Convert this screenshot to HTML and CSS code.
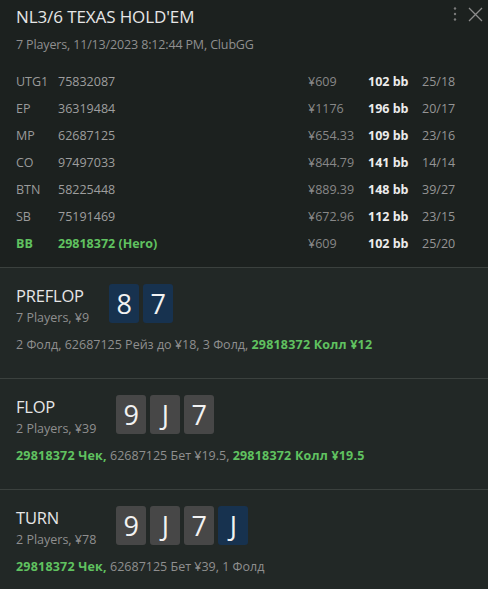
FILE: index.html
```html
<!DOCTYPE html>
<html>
<head>
<meta charset="utf-8">
<link rel="stylesheet" href="styles.css">
</head>
<body>
<div class="panel">
  <header class="head">
    <div class="head-top">
      <div>
        <div class="title">NL3/6 TEXAS HOLD'EM</div>
        <div class="sub">7 Players, 11/13/2023 8:12:44 PM, ClubGG</div>
      </div>
      <div class="icons">
        <svg class="dots" width="6" height="16" viewBox="0 0 6 16"><circle cx="3" cy="2.5" r="1.2"/><circle cx="3" cy="8" r="1.2"/><circle cx="3" cy="13.5" r="1.2"/></svg>
        <svg class="close" width="15" height="15" viewBox="0 0 15 15"><path d="M1 1 L14 14 M14 1 L1 14"/></svg>
      </div>
    </div>
    <div class="players">
      <div class="row"><span class="pos">UTG1</span><span class="name">75832087</span><span class="stack">¥609</span><span class="bb">102 bb</span><span class="ratio">25/18</span></div>
      <div class="row"><span class="pos">EP</span><span class="name">36319484</span><span class="stack">¥1176</span><span class="bb">196 bb</span><span class="ratio">20/17</span></div>
      <div class="row"><span class="pos">MP</span><span class="name">62687125</span><span class="stack">¥654.33</span><span class="bb">109 bb</span><span class="ratio">23/16</span></div>
      <div class="row"><span class="pos">CO</span><span class="name">97497033</span><span class="stack">¥844.79</span><span class="bb">141 bb</span><span class="ratio">14/14</span></div>
      <div class="row"><span class="pos">BTN</span><span class="name">58225448</span><span class="stack">¥889.39</span><span class="bb">148 bb</span><span class="ratio">39/27</span></div>
      <div class="row"><span class="pos">SB</span><span class="name">75191469</span><span class="stack">¥672.96</span><span class="bb">112 bb</span><span class="ratio">23/15</span></div>
      <div class="row hero"><span class="pos">BB</span><span class="name">29818372 (Hero)</span><span class="stack">¥609</span><span class="bb">102 bb</span><span class="ratio">25/20</span></div>
    </div>
  </header>

  <section class="street">
    <div class="street-top">
      <div class="street-info">
        <div class="street-name">PREFLOP</div>
        <div class="street-sub">7 Players, ¥9</div>
      </div>
      <div class="cards">
        <div class="card hole">8</div>
        <div class="card hole">7</div>
      </div>
    </div>
    <div class="actions">2 Фолд, 62687125 Рейз до ¥18, 3 Фолд, <b class="me">29818372 Колл ¥12</b></div>
  </section>

  <section class="street">
    <div class="street-top">
      <div class="street-info">
        <div class="street-name">FLOP</div>
        <div class="street-sub">2 Players, ¥39</div>
      </div>
      <div class="cards">
        <div class="card">9</div>
        <div class="card">J</div>
        <div class="card">7</div>
      </div>
    </div>
    <div class="actions"><b class="me">29818372 Чек,</b> 62687125 Бет ¥19.5, <b class="me">29818372 Колл ¥19.5</b></div>
  </section>

  <section class="street last">
    <div class="street-top">
      <div class="street-info">
        <div class="street-name">TURN</div>
        <div class="street-sub">2 Players, ¥78</div>
      </div>
      <div class="cards">
        <div class="card">9</div>
        <div class="card">J</div>
        <div class="card">7</div>
        <div class="card hole">J</div>
      </div>
    </div>
    <div class="actions"><b class="me">29818372 Чек,</b> 62687125 Бет ¥39, 1 Фолд</div>
  </section>
</div>
</body>
</html>
```

FILE: styles.css
```css
* { box-sizing: border-box; }
html, body {
  margin: 0;
  padding: 0;
  background: #222826;
}
body {
  font-family: "Open Sans", "Noto Sans", sans-serif;
  color: #a3a3a3;
  width: 488px;
  height: 589px;
  overflow: hidden;
}
.panel { display: flex; flex-direction: column; }

.head {
  background: #1c211f;
  padding: 5px 16px 0 16px;
  height: 268px;
  border-bottom: 1px solid #3b413e;
}
.head-top {
  display: flex;
  justify-content: space-between;
  align-items: flex-start;
}
.title {
  font-size: 17px;
  color: #e6e6e6;
  line-height: 24px;
  letter-spacing: -0.1px;
}
.sub {
  font-size: 12.5px;
  color: #8f8f8f;
  line-height: 18px;
  margin-top: 7px;
  letter-spacing: -0.15px;
}
.icons {
  display: flex;
  align-items: center;
  gap: 10px;
  margin-top: 1px;
  margin-right: -11px;
}
.dots { fill: #7a7a7a; }
.close { stroke: #8c8c8c; stroke-width: 1.3; fill: none; }

.players {
  margin-top: 14px;
  display: flex;
  flex-direction: column;
}
.row {
  display: grid;
  grid-template-columns: 42px 250px 60px 54px auto;
  height: 27px;
  align-items: center;
  font-size: 12.5px;
}
.pos { color: #9a9a9a; }
.name { color: #9e9e9e; }
.stack { color: #888888; }
.bb { color: #ececec; font-weight: 700; }
.ratio { color: #959595; }
.row.hero .pos, .row.hero .name { color: #60c260; font-weight: 700; }

.street {
  padding: 16px 16px 0 16px;
  height: 111px;
  border-bottom: 1px solid #3b413e;
}
.street.last { border-bottom: none; height: auto; }
.street-top {
  display: flex;
  align-items: flex-start;
  gap: 20px;
}
.street-info { padding-top: 2px; }
.street-name {
  font-size: 16.5px;
  color: #e6e6e6;
  line-height: 20px;
  letter-spacing: -0.2px;
}
.street-sub {
  font-size: 12.5px;
  color: #8f8f8f;
  line-height: 18px;
  margin-top: 3px;
}
.cards { display: flex; gap: 4px; }
.card {
  width: 30px;
  height: 39px;
  border-radius: 3px;
  background: #474747;
  color: #f2f2f2;
  font-size: 27px;
  line-height: 39px;
  text-align: center;
}
.card.hole { background: #17324f; }
.actions {
  margin-top: 9px;
  font-size: 12.5px;
  line-height: 18px;
  color: #8f8f8f;
}
.me { color: #60c260; font-weight: 700; letter-spacing: 0.2px; }
```
